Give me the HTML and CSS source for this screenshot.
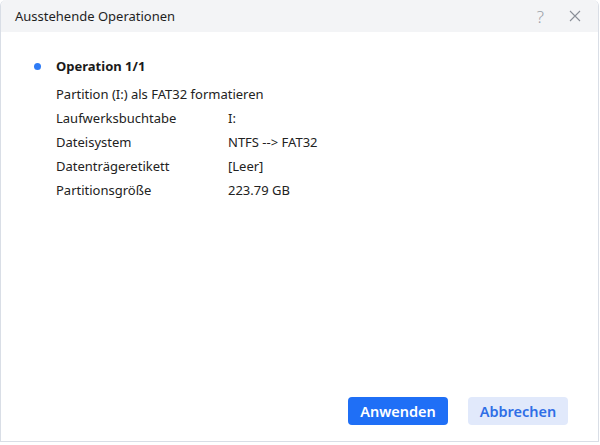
FILE: index.html
```html
<!DOCTYPE html>
<html lang="de">
<head>
<meta charset="utf-8">
<title>Ausstehende Operationen</title>
<link rel="stylesheet" href="styles.css">
</head>
<body>
<div class="dialog">
  <header class="titlebar">
    <span class="title">Ausstehende Operationen</span>
    <div class="tb-actions">
      <span class="help">?</span>
      <svg class="close" width="12" height="12" viewBox="0 0 12 12"><path d="M1 1 L11 11 M11 1 L1 11" stroke="#8a8f98" stroke-width="1.1" fill="none"/></svg>
    </div>
  </header>
  <main class="content">
    <div class="op-head">
      <span class="dot"></span>
      <span class="op-title">Operation 1/1</span>
    </div>
    <div class="op-body">
      <div class="desc">Partition (I:) als FAT32 formatieren</div>
      <div class="row"><span class="label">Laufwerksbuchtabe</span><span class="value">I:</span></div>
      <div class="row"><span class="label">Dateisystem</span><span class="value">NTFS --&gt; FAT32</span></div>
      <div class="row"><span class="label">Datenträgeretikett</span><span class="value">[Leer]</span></div>
      <div class="row"><span class="label">Partitionsgröße</span><span class="value">223.79 GB</span></div>
    </div>
  </main>
  <footer class="footer">
    <button class="btn primary">Anwenden</button>
    <button class="btn secondary">Abbrechen</button>
  </footer>
</div>
</body>
</html>
```
FILE: styles.css
```css
* { box-sizing: border-box; }
html, body { margin: 0; padding: 0; }
body {
  width: 600px;
  height: 445px;
  background: #ffffff;
  font-family: "Noto Sans", "DejaVu Sans", sans-serif;
  color: #1f1f1f;
  overflow: hidden;
}
.dialog {
  width: 599px;
  height: 442px;
  border: 1px solid #d9dee6;
  border-top: none;
  border-radius: 6px 6px 0 0;
  background: #ffffff;
  display: flex;
  flex-direction: column;
  overflow: hidden;
}
.titlebar {
  height: 32px;
  flex: 0 0 32px;
  background: #f3f4f6;
  display: flex;
  align-items: center;
  justify-content: space-between;
  padding: 0 17px 0 14px;
}
.title {
  font-size: 13px;
  color: #1f1f1f;
}
.tb-actions {
  display: flex;
  align-items: center;
  gap: 25px;
}
.help {
  font-size: 17px;
  color: #9aa0a8;
  font-weight: 300;
  line-height: 1;
}
.close { display: block; }
.content {
  flex: 1;
  padding: 23px 0 0 33px;
}
.op-head {
  display: flex;
  align-items: center;
  height: 22px;
}
.dot {
  width: 7px;
  height: 7px;
  border-radius: 50%;
  background: #2f7cf6;
  margin-right: 15px;
}
.op-title {
  font-size: 13px;
  font-weight: 700;
  color: #1a1a1a;
}
.op-body {
  padding-left: 22px;
  padding-top: 5px;
  font-size: 13px;
  color: #222222;
}
.desc, .row {
  height: 24px;
  line-height: 24px;
}
.row { display: flex; }
.label { width: 172px; }
.footer {
  display: flex;
  justify-content: flex-end;
  gap: 20px;
  padding: 0 30px 16px 0;
}
.btn {
  width: 100px;
  height: 28px;
  border: none;
  border-radius: 4px;
  font-family: "Noto Sans", "DejaVu Sans", sans-serif;
  font-size: 14.5px;
  font-weight: 600;
  cursor: pointer;
}
.primary { background: #1f6ff6; color: #ffffff; }
.secondary { background: #e1e9fb; color: #2f6ee6; }
```
